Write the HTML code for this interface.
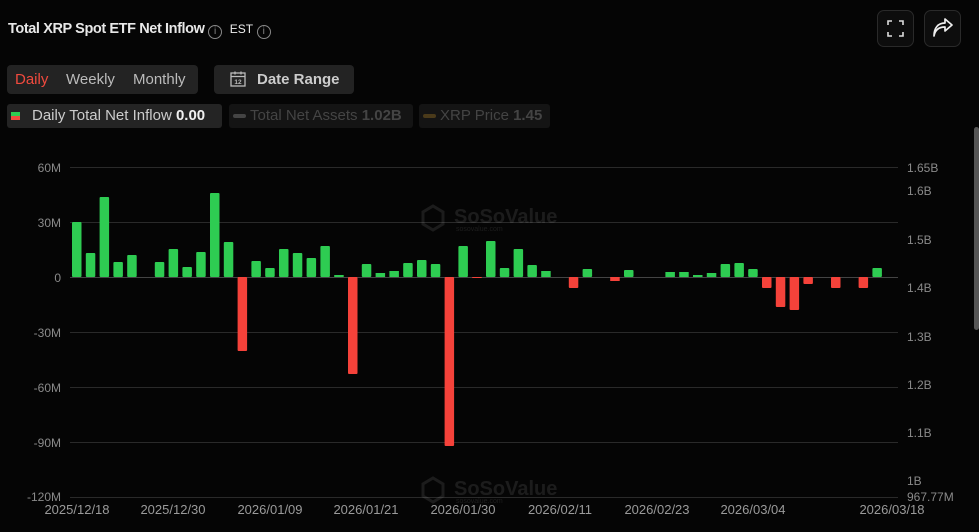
<!DOCTYPE html>
<html><head><meta charset="utf-8"><style>
*{margin:0;padding:0;box-sizing:border-box}
body{width:979px;height:532px;background:#050505;overflow:hidden;position:relative;font-family:"Liberation Sans",sans-serif;color:#ddd}
.abs{position:absolute}
.title{left:8px;top:21px;font-size:14.5px;font-weight:bold;color:#e8e8e8;letter-spacing:-0.4px;white-space:nowrap}
.info{display:inline-block;width:14px;height:14px;border:1px solid #888;border-radius:50%;font-size:10px;color:#888;text-align:center;line-height:12px;font-weight:normal;vertical-align:-1px;letter-spacing:0}
.btn{border:1px solid #2a2a2a;border-radius:7px;background:#0d0d0d;width:37px;height:37px;top:10px}
.grp{left:7px;top:65px;width:191px;height:29px;background:#232323;border-radius:4px;font-size:15px;line-height:29px}
.grp span{position:absolute;top:0}
.dr{left:214px;top:65px;width:140px;height:29px;background:#232323;border-radius:4px;font-size:15px;font-weight:bold;line-height:29px;color:#ccc}
.chip{top:104px;height:24px;border-radius:3px;font-size:15px;line-height:24px;white-space:nowrap}
</style></head><body>
<div class="abs title">Total XRP Spot ETF Net Inflow <span class="info">i</span> <span style="font-weight:normal;font-size:12px;color:#eee;margin-left:4px;letter-spacing:0">EST</span> <span class="info">i</span></div>
<div class="abs btn" style="left:877px"><svg width="37" height="37" viewBox="0 0 37 37" style="position:absolute;left:-1px;top:-1px"><path d="M11 15v-4h4M22 11h4v4M26 22v4h-4M15 26h-4v-4" stroke="#ddd" stroke-width="1.6" fill="none"/></svg></div>
<div class="abs btn" style="left:924px"><svg width="37" height="37" viewBox="0 0 37 37" style="position:absolute;left:-1px;top:-1px"><path d="M10 26c1-6 5-9 11-9v4l7-6-7-6v4c-7 0-11 5-11 13z" stroke="#eee" stroke-width="1.7" fill="none" stroke-linejoin="round"/></svg></div>
<div class="abs grp"><span style="left:8px;color:#f04a3e">Daily</span><span style="left:59px;color:#bbb">Weekly</span><span style="left:126px;color:#bbb">Monthly</span></div>
<div class="abs dr"><svg width="18" height="18" viewBox="0 0 18 18" style="position:absolute;left:15px;top:5px"><rect x="2" y="3" width="14" height="13" fill="none" stroke="#bbb" stroke-width="1.3"/><path d="M2 6.5h14M6 1.5v3M12 1.5v3" stroke="#bbb" stroke-width="1.3"/><text x="9" y="14" font-size="6.5" fill="#bbb" text-anchor="middle" font-family="Liberation Sans">12</text></svg><span style="position:absolute;left:43px">Date Range</span></div>
<div class="abs chip" style="left:7px;width:215px;background:#242424;color:#ccc"><span style="position:absolute;left:4px;top:8px;width:9px;height:4px;background:#2ecc52"></span><span style="position:absolute;left:4px;top:12px;width:9px;height:4px;background:#f04a3e"></span><span style="position:absolute;left:25px">Daily Total Net Inflow <b style="color:#f0f0f0">0.00</b></span></div>
<div class="abs chip" style="left:229px;width:184px;background:#141414;color:#444"><span style="position:absolute;left:4px;top:10px;width:13px;height:4px;background:#444;border-radius:2px"></span><span style="position:absolute;left:21px">Total Net Assets <b>1.02B</b></span></div>
<div class="abs chip" style="left:419px;width:131px;background:#141414;color:#444"><span style="position:absolute;left:4px;top:10px;width:13px;height:4px;background:#4a3a1a;border-radius:2px"></span><span style="position:absolute;left:21px">XRP Price <b>1.45</b></span></div>
<div class="abs" style="left:974px;top:127px;width:5px;height:203px;background:#555;border-radius:3px"></div>
<svg class="abs" style="left:0;top:0" width="979" height="532" font-family="Liberation Sans, sans-serif">
<g stroke="#2a2a2a" stroke-width="1">
<line x1="70" x2="898" y1="167.5" y2="167.5"/><line x1="70" x2="898" y1="222.5" y2="222.5"/><line x1="70" x2="898" y1="277.5" y2="277.5" stroke="#444"/><line x1="70" x2="898" y1="332.5" y2="332.5"/><line x1="70" x2="898" y1="387.5" y2="387.5"/><line x1="70" x2="898" y1="442.5" y2="442.5"/><line x1="70" x2="898" y1="497.5" y2="497.5"/>
</g>
<g font-size="12" fill="#8a8a8a" text-anchor="end">
<text x="61" y="172">60M</text><text x="61" y="227">30M</text><text x="61" y="282">0</text><text x="61" y="337">-30M</text><text x="61" y="392">-60M</text><text x="61" y="447">-90M</text><text x="61" y="501">-120M</text></g>
<g font-size="12" fill="#8a8a8a">
<text x="907" y="172">1.65B</text><text x="907" y="195">1.6B</text><text x="907" y="244">1.5B</text><text x="907" y="292">1.4B</text><text x="907" y="341">1.3B</text><text x="907" y="389">1.2B</text><text x="907" y="437">1.1B</text><text x="907" y="485">1B</text><text x="907" y="501">967.77M</text></g>
<g font-size="13" fill="#9a9a9a" text-anchor="middle">
<text x="77" y="514">2025/12/18</text><text x="173" y="514">2025/12/30</text><text x="270" y="514">2026/01/09</text><text x="366" y="514">2026/01/21</text><text x="463" y="514">2026/01/30</text><text x="560" y="514">2026/02/11</text><text x="657" y="514">2026/02/23</text><text x="753" y="514">2026/03/04</text><text x="892" y="514">2026/03/18</text></g>
<g opacity="0.14" fill="#aaa">
<path d="M433 206l10 6v12l-10 6-10-6v-12z" fill="none" stroke="#aaa" stroke-width="3"/>
<text x="454" y="223" font-size="20" font-weight="bold">SoSoValue</text><text x="456" y="231" font-size="7">sosovalue.com</text>
<path d="M433 478l10 6v12l-10 6-10-6v-12z" fill="none" stroke="#aaa" stroke-width="3"/>
<text x="454" y="495" font-size="20" font-weight="bold">SoSoValue</text><text x="456" y="503" font-size="7">sosovalue.com</text>
</g>
<g fill="#2ecc52">
<rect x="72" y="222" width="9.5" height="55" rx="1"/><rect x="85.8" y="253" width="9.5" height="24" rx="1"/><rect x="99.6" y="197" width="9.5" height="80" rx="1"/><rect x="113.4" y="262" width="9.5" height="15" rx="1"/><rect x="127.2" y="255" width="9.5" height="22" rx="1"/><rect x="154.8" y="262" width="9.5" height="15" rx="1"/><rect x="168.6" y="249" width="9.5" height="28" rx="1"/><rect x="182.4" y="267" width="9.5" height="10" rx="1"/><rect x="196.2" y="252" width="9.5" height="25" rx="1"/><rect x="210" y="193" width="9.5" height="84" rx="1"/><rect x="223.8" y="242" width="9.5" height="35" rx="1"/><rect x="251.4" y="261" width="9.5" height="16" rx="1"/><rect x="265.2" y="268" width="9.5" height="9" rx="1"/><rect x="279" y="249" width="9.5" height="28" rx="1"/><rect x="292.8" y="253" width="9.5" height="24" rx="1"/><rect x="306.6" y="258" width="9.5" height="19" rx="1"/><rect x="320.4" y="246" width="9.5" height="31" rx="1"/><rect x="334.2" y="275" width="9.5" height="2"/><rect x="361.8" y="264" width="9.5" height="13" rx="1"/><rect x="375.6" y="273" width="9.5" height="4"/><rect x="389.4" y="271" width="9.5" height="6"/><rect x="403.2" y="263" width="9.5" height="14" rx="1"/><rect x="417" y="260" width="9.5" height="17" rx="1"/><rect x="430.8" y="264" width="9.5" height="13" rx="1"/><rect x="458.4" y="246" width="9.5" height="31" rx="1"/><rect x="486" y="241" width="9.5" height="36" rx="1"/><rect x="499.8" y="268" width="9.5" height="9" rx="1"/><rect x="513.6" y="249" width="9.5" height="28" rx="1"/><rect x="527.4" y="265" width="9.5" height="12" rx="1"/><rect x="541.2" y="271" width="9.5" height="6"/><rect x="582.6" y="269" width="9.5" height="8" rx="1"/><rect x="624" y="270" width="9.5" height="7" rx="1"/><rect x="665.4" y="272" width="9.5" height="5"/><rect x="679.2" y="272" width="9.5" height="5"/><rect x="693" y="275" width="9.5" height="2"/><rect x="706.8" y="273" width="9.5" height="4"/><rect x="720.6" y="264" width="9.5" height="13" rx="1"/><rect x="734.4" y="263" width="9.5" height="14" rx="1"/><rect x="748.2" y="269" width="9.5" height="8" rx="1"/><rect x="872.4" y="268" width="9.5" height="9" rx="1"/>
</g>
<g fill="#f5423a">
<rect x="237.6" y="277" width="9.5" height="74" rx="1"/><rect x="348" y="277" width="9.5" height="97" rx="1"/><rect x="444.6" y="277" width="9.5" height="169" rx="1"/><rect x="472.2" y="277" width="9.5" height="1"/><rect x="568.8" y="277" width="9.5" height="11" rx="1"/><rect x="610.2" y="277" width="9.5" height="4"/><rect x="762" y="277" width="9.5" height="11" rx="1"/><rect x="775.8" y="277" width="9.5" height="30" rx="1"/><rect x="789.6" y="277" width="9.5" height="33" rx="1"/><rect x="803.4" y="277" width="9.5" height="7" rx="1"/><rect x="831" y="277" width="9.5" height="11" rx="1"/><rect x="858.6" y="277" width="9.5" height="11" rx="1"/>
</g>
</svg>
</body></html>
